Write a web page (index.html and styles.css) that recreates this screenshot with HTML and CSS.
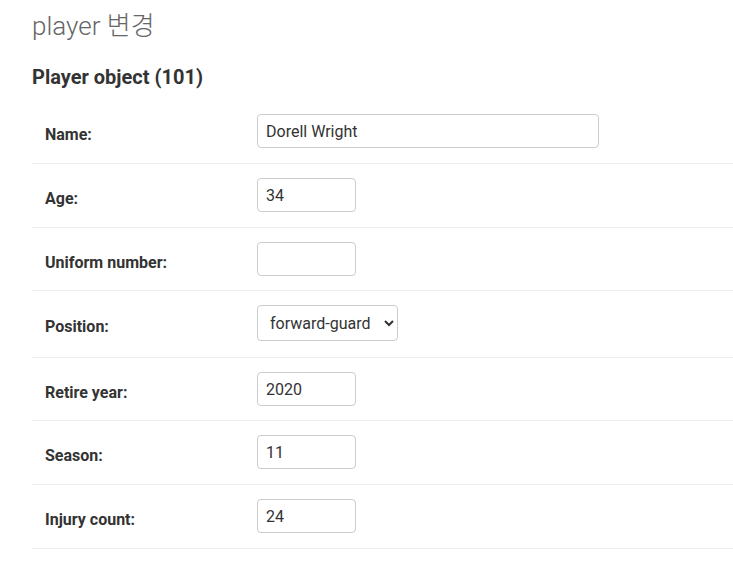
FILE: index.html
```html
<!DOCTYPE html>
<html lang="ko">
<head>
<meta charset="utf-8">
<link rel="stylesheet" href="styles.css">
</head>
<body>
<div class="content">
  <h1 class="page-title">player 변경</h1>
  <h2 class="object-title">Player object (101)</h2>
  <fieldset class="module">
    <div class="form-row">
      <label class="field-label">Name:</label>
      <input class="field-input text-wide" type="text" value="Dorell Wright">
    </div>
    <div class="form-row">
      <label class="field-label">Age:</label>
      <input class="field-input text-short" type="text" value="34">
    </div>
    <div class="form-row row-short">
      <label class="field-label">Uniform number:</label>
      <input class="field-input text-short" type="text" value="">
    </div>
    <div class="form-row row-select">
      <label class="field-label">Position:</label>
      <select class="field-select">
        <option>forward-guard</option>
      </select>
    </div>
    <div class="form-row row-short">
      <label class="field-label">Retire year:</label>
      <input class="field-input text-short" type="text" value="2020">
    </div>
    <div class="form-row">
      <label class="field-label">Season:</label>
      <input class="field-input text-short" type="text" value="11">
    </div>
    <div class="form-row">
      <label class="field-label">Injury count:</label>
      <input class="field-input text-short" type="text" value="24">
    </div>
  </fieldset>
</div>
</body>
</html>
```
FILE: styles.css
```css
* { box-sizing: border-box; }
body {
  margin: 0;
  background: #fff;
  font-family: Roboto, "Noto Sans CJK KR", sans-serif;
  color: #333;
}
.content {
  padding: 0 0 0 32px;
}
.page-title {
  margin: 0;
  padding-top: 11px;
  font-size: 26px;
  line-height: 30px;
  font-weight: 300;
  color: #666;
}
.object-title {
  margin: 0;
  padding-top: 24px;
  font-size: 20px;
  line-height: 24px;
  font-weight: 700;
  color: #333;
}
.module {
  margin: 11px 0 0 0;
  padding: 0;
  border: none;
}
.form-row {
  display: flex;
  align-items: center;
  padding: 14px 0 15px 13px;
  border-bottom: 1px solid #eee;
}
.form-row.row-short { padding-bottom: 14px; }
.form-row.row-select { padding-bottom: 16px; }
.field-label {
  width: 212px;
  flex: none;
  padding-top: 6px;
  font-size: 16px;
  font-weight: 700;
  color: #333;
}
.field-input {
  height: 34px;
  padding: 4px 8px;
  border: 1px solid #ccc;
  border-radius: 4px;
  font-family: Roboto, sans-serif;
  font-size: 16px;
  color: #333;
  background: #fff;
}
.text-wide { width: 342px; }
.text-short { width: 99px; }
.field-select {
  height: 36px;
  width: 141px;
  padding: 0 4px 0 8px;
  border: 1px solid #ccc;
  border-radius: 4px;
  font-family: Roboto, sans-serif;
  font-size: 16px;
  color: #333;
  background: #fff;
}
```
